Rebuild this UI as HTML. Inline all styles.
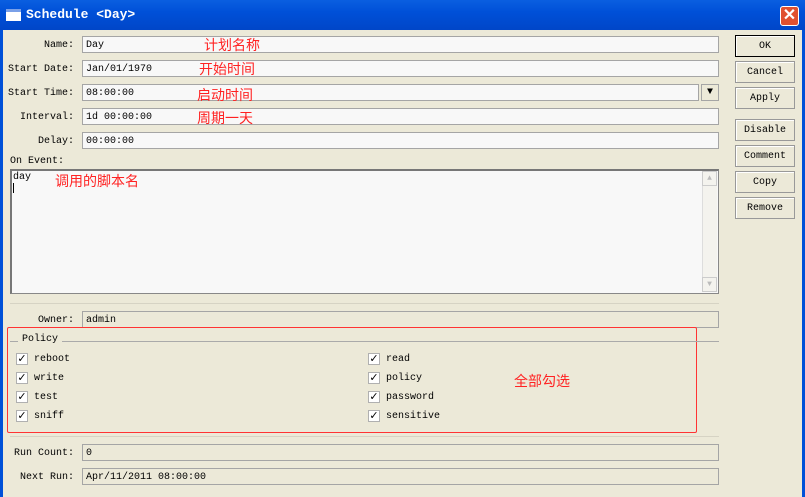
<!DOCTYPE html>
<html><head><meta charset="utf-8"><style>
*{margin:0;padding:0;box-sizing:border-box}
body{width:805px;height:497px;overflow:hidden;background:#ece9d8;font-family:"Liberation Mono",monospace;font-size:10px;color:#000;position:relative}
.a{position:absolute}
.title{left:0;top:0;width:805px;height:30px;background:linear-gradient(#0a5fe0,#0050d8 40%,#0046c8);}
.tt{left:26px;top:7px;color:#fff;font-weight:bold;font-size:13px;font-family:"Liberation Mono",monospace}
.lb{position:absolute;width:74px;text-align:right;white-space:nowrap}
.f{position:absolute;background:#f8f8f8;border:1px solid #a5a5a5;padding:3px 0 0 3px;height:17px;line-height:12px;white-space:nowrap}
.ro{background:#ece9d8}
.btn{position:absolute;left:735px;width:60px;height:22px;border:1px solid #999;background:#ece9d8;text-align:center;line-height:22px;box-shadow:inset 1px 1px #fff}
.cb{position:absolute;width:12px;height:12px;border:1px solid #b0b0b0;background:#fff;font-size:11px;line-height:10px;text-align:center;font-weight:bold;font-family:"DejaVu Sans",sans-serif}
.cl{position:absolute}
.cn{font-family:"Liberation Sans","Noto Sans CJK SC",sans-serif;color:#f22;font-size:14px;position:absolute}
</style></head><body>
<div class="a" style="left:0;top:0;width:3px;height:497px;background:#0050d8"></div>
<div class="a" style="right:0;top:0;width:3px;height:497px;background:#0050d8"></div>
<div class="a title"></div>
<div class="a" style="left:6px;top:9px;width:15px;height:12px;background:#fff;border-top:3px solid #7aa0e8"></div>
<div class="a tt">Schedule &lt;Day&gt;</div>
<div class="a" style="left:780px;top:6px;width:19px;height:20px;background:#e05030;border:1px solid #fff;border-radius:3px;color:#fff;font:bold 16px 'Liberation Sans';text-align:center;line-height:18px">✕</div>

<div class="lb" style="left:0;top:40px">Name:</div><div class="f" style="left:82px;top:36px;width:637px">Day</div>
<div class="lb" style="left:0;top:64px">Start Date:</div><div class="f" style="left:82px;top:60px;width:637px">Jan/01/1970</div>
<div class="lb" style="left:0;top:88px">Start Time:</div><div class="f" style="left:82px;top:84px;width:617px">08:00:00</div>
<div class="a" style="left:701px;top:84px;width:18px;height:17px;border:1px solid #a5a5a5;text-align:center;font-size:10px;line-height:15px">▼</div>
<div class="lb" style="left:0;top:112px">Interval:</div><div class="f" style="left:82px;top:108px;width:637px">1d 00:00:00</div>
<div class="lb" style="left:0;top:136px">Delay:</div><div class="f" style="left:82px;top:132px;width:637px">00:00:00</div>
<div class="cn" style="left:204px;top:35px">计划名称</div>
<div class="cn" style="left:199px;top:59px">开始时间</div>
<div class="cn" style="left:197px;top:85px">启动时间</div>
<div class="cn" style="left:197px;top:108px">周期一天</div>

<div class="a" style="left:10px;top:156px">On Event:</div>
<div class="a" style="left:10px;top:169px;width:709px;height:125px;background:#f8f8f8;border:1px solid #888;border-top:2px solid #777;border-left:2px solid #777"></div>
<div class="a" style="left:13px;top:172px">day</div>
<div class="a" style="left:13px;top:183px;width:1px;height:10px;background:#000"></div>
<div class="cn" style="left:55px;top:171px">调用的脚本名</div>
<div class="a" style="left:702px;top:171px;width:15px;height:121px;background:#f4f3ee;border-left:1px solid #ddd"></div>
<div class="a" style="left:702px;top:171px;width:15px;height:15px;border:1px solid #ccc;color:#bbb;font-size:8px;text-align:center;line-height:13px">▲</div>
<div class="a" style="left:702px;top:277px;width:15px;height:15px;border:1px solid #ccc;color:#bbb;font-size:8px;text-align:center;line-height:13px">▼</div>
<div class="a" style="left:10px;top:303px;width:709px;height:1px;background:#d6d3c4"></div>

<div class="lb" style="left:0;top:315px">Owner:</div><div class="f ro" style="left:82px;top:311px;width:637px">admin</div>
<div class="a" style="left:7px;top:327px;width:690px;height:106px;border:1px solid #f33;border-radius:2px"></div>
<div class="a" style="left:10px;top:341px;width:709px;height:1px;background:#aaa"></div>
<div class="a" style="left:18px;top:334px;background:#ece9d8;padding:0 4px">Policy</div>
<div class="cb" style="left:16px;top:353px">✓</div><div class="cl" style="left:34px;top:354px">reboot</div>
<div class="cb" style="left:16px;top:372px">✓</div><div class="cl" style="left:34px;top:373px">write</div>
<div class="cb" style="left:16px;top:391px">✓</div><div class="cl" style="left:34px;top:392px">test</div>
<div class="cb" style="left:16px;top:410px">✓</div><div class="cl" style="left:34px;top:411px">sniff</div>
<div class="cb" style="left:368px;top:353px">✓</div><div class="cl" style="left:386px;top:354px">read</div>
<div class="cb" style="left:368px;top:372px">✓</div><div class="cl" style="left:386px;top:373px">policy</div>
<div class="cb" style="left:368px;top:391px">✓</div><div class="cl" style="left:386px;top:392px">password</div>
<div class="cb" style="left:368px;top:410px">✓</div><div class="cl" style="left:386px;top:411px">sensitive</div>
<div class="cn" style="left:514px;top:371px">全部勾选</div>
<div class="a" style="left:10px;top:436px;width:709px;height:1px;background:#d6d3c4"></div>

<div class="lb" style="left:0;top:448px">Run Count:</div><div class="f ro" style="left:82px;top:444px;width:637px">0</div>
<div class="lb" style="left:0;top:472px">Next Run:</div><div class="f ro" style="left:82px;top:468px;width:637px">Apr/11/2011 08:00:00</div>

<div class="btn" style="top:35px;border:1px solid #000">OK</div>
<div class="btn" style="top:61px">Cancel</div>
<div class="btn" style="top:87px">Apply</div>
<div class="btn" style="top:119px">Disable</div>
<div class="btn" style="top:145px">Comment</div>
<div class="btn" style="top:171px">Copy</div>
<div class="btn" style="top:197px">Remove</div>
</body></html>
